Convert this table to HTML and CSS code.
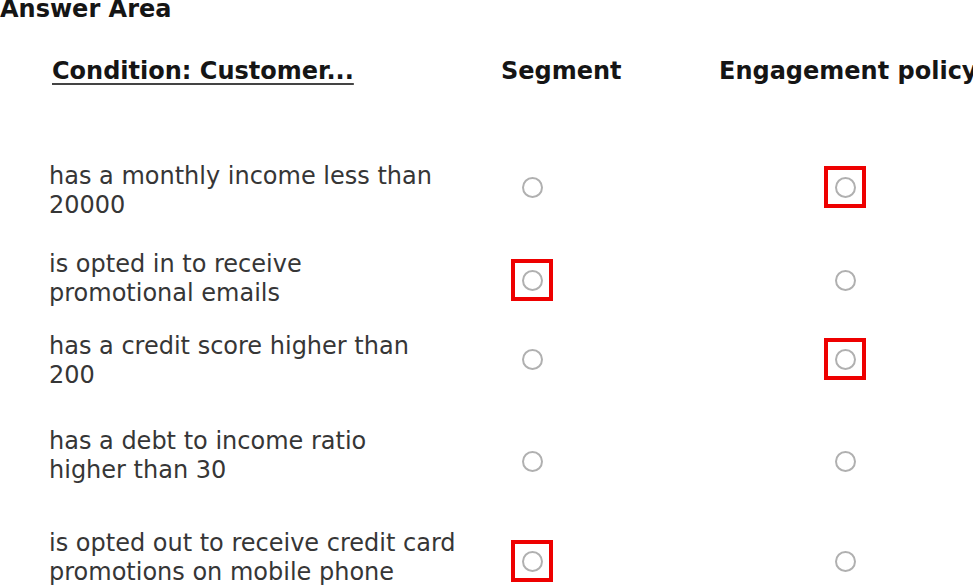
FILE: index.html
```html
<!DOCTYPE html>
<html lang="en">
<head>
<meta charset="utf-8">
<title>Answer Area</title>
<link rel="stylesheet" href="styles.css">
</head>
<body>
<div class="page">
  <h1 class="title">Answer Area</h1>
  <div class="head">
    <span class="head-cond">Condition: Customer...</span>
    <span>Segment</span>
    <span>Engagement policy</span>
  </div>
  <div class="rows">
    <div class="row">
      <div class="cond">has a monthly income less than<br>20000</div>
      <div class="cell"><span class="radio"></span></div>
      <div class="cell cell-eng"><span class="mark"><span class="radio"></span></span></div>
    </div>
    <div class="row">
      <div class="cond">is opted in to receive<br>promotional emails</div>
      <div class="cell"><span class="mark"><span class="radio"></span></span></div>
      <div class="cell cell-eng"><span class="radio"></span></div>
    </div>
    <div class="row">
      <div class="cond">has a credit score higher than<br>200</div>
      <div class="cell"><span class="radio"></span></div>
      <div class="cell cell-eng"><span class="mark"><span class="radio"></span></span></div>
    </div>
    <div class="row">
      <div class="cond">has a debt to income ratio<br>higher than 30</div>
      <div class="cell"><span class="radio"></span></div>
      <div class="cell cell-eng"><span class="radio"></span></div>
    </div>
    <div class="row">
      <div class="cond">is opted out to receive credit card<br>promotions on mobile phone</div>
      <div class="cell"><span class="mark"><span class="radio"></span></span></div>
      <div class="cell cell-eng"><span class="radio"></span></div>
    </div>
  </div>
</div>
</body>
</html>
```

FILE: styles.css
```css
html, body {
  margin: 0;
  padding: 0;
  background: #ffffff;
}

body {
  font-family: "DejaVu Sans", Verdana, sans-serif;
  font-size: 24px;
  color: #333333;
  width: 973px;
  height: 587px;
  overflow: hidden;
}

.title {
  margin: 0;
  font-size: 24px;
  font-weight: bold;
  line-height: 18px;
  color: #151515;
}

.head {
  display: grid;
  grid-template-columns: 449px 218px auto;
  padding-left: 52px;
  margin-top: 39px;
  font-weight: bold;
  line-height: 28px;
  color: #151515;
  white-space: nowrap;
}

.head-cond {
  text-decoration: underline;
  text-decoration-thickness: 2px;
  text-underline-offset: 4px;
  text-decoration-color: #444444;
}

.rows {
  display: flex;
  flex-direction: column;
  padding-left: 49px;
}

.row {
  display: grid;
  grid-template-columns: 462px 42px 271px 42px;
  align-items: center;
}

.row:nth-child(1) { margin-top: 77px; }
.row:nth-child(2) { margin-top: 30px; }
.row:nth-child(3) { margin-top: 24px; }
.row:nth-child(4) { margin-top: 37px; }
.row:nth-child(5) { margin-top: 44px; }

.row:nth-child(1) .cell { margin-bottom: 8px; }
.row:nth-child(2) .cell { margin-top: 2px; }
.row:nth-child(3) .cell { margin-bottom: 4px; }
.row:nth-child(4) .cell { margin-top: 10px; }
.row:nth-child(5) .cell { margin-top: 6px; }

.cond {
  line-height: 29px;
  white-space: nowrap;
  color: #363636;
}

.cell {
  display: flex;
  justify-content: center;
  align-items: center;
  height: 42px;
}

.cell-eng {
  grid-column: 4;
}

.radio {
  display: block;
  width: 17px;
  height: 17px;
  border: 2.5px solid #b0b0b0;
  border-radius: 50%;
  background: #ffffff;
}

.mark {
  display: flex;
  justify-content: center;
  align-items: center;
  width: 35px;
  height: 34px;
  border: 4px solid #ee0000;
}
```
